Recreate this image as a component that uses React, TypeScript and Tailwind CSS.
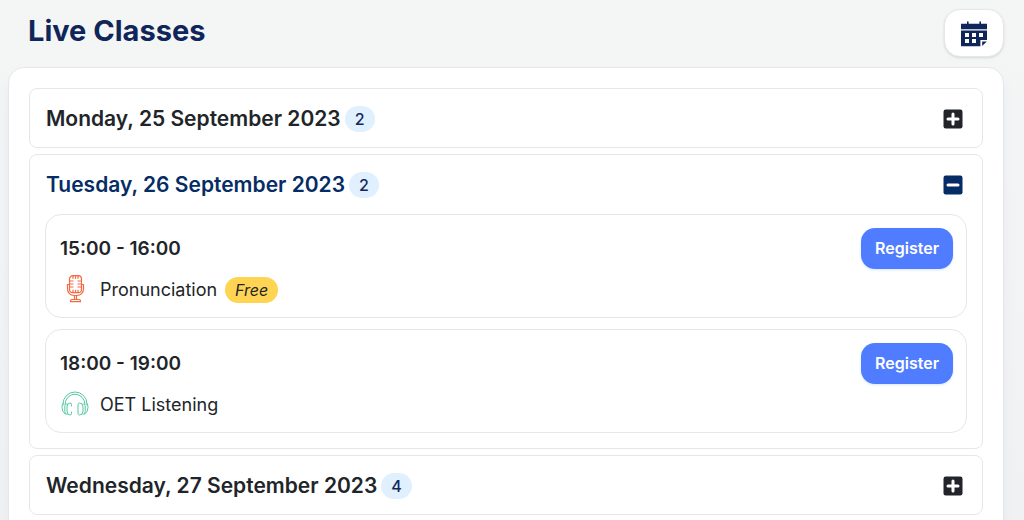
import React, { useState } from 'react'

type IconName = 'microphone' | 'headphones'

interface LiveClass {
    time: string
    title: string
    icon: IconName
    free?: boolean
}

interface ClassDay {
    id: string
    label: string
    count: number
    classes: LiveClass[]
}

const days: ClassDay[] = [
    { id: 'mon', label: 'Monday, 25 September 2023', count: 2, classes: [] },
    {
        id: 'tue',
        label: 'Tuesday, 26 September 2023',
        count: 2,
        classes: [
            { time: '15:00 - 16:00', title: 'Pronunciation', icon: 'microphone', free: true },
            { time: '18:00 - 19:00', title: 'OET Listening', icon: 'headphones' },
        ],
    },
    { id: 'wed', label: 'Wednesday, 27 September 2023', count: 4, classes: [] },
]

const CalendarIcon: React.FC = () => (
    <svg viewBox="0 0 26 26" className="size-[26px]" fill="currentColor" aria-hidden="true">
        <path d="M0 2.700h6V1a.8.8 0 0 1 1.600 0v1.700h10.800V1a.8.8 0 0 1 1.600 0v1.700h6V8.300H0z" />
        <path
            fillRule="evenodd"
            d="M0 9.600h26v9.400h-6.600V25.200H0zM4 12v4h4V12zm7 0v4h4V12zm7 0v4h4V12zM4 18v4h4v-4zm7 0v4h4v-4z"
        />
        <path d="M21.200 20.600h4.600l-4.600 4.400z" />
    </svg>
)

/** Filled square with a plus when the day is closed and a minus when it is open. */
const ToggleIcon: React.FC<{ open: boolean }> = ({ open }) => (
    <svg viewBox="0 0 20 20" className="size-5" aria-hidden="true">
        <rect x="0.500" y="0.500" width="19" height="19" rx="2.200" fill="currentColor" />
        <path
            d={open ? 'M5 10h10' : 'M5 10h10M10 5v10'}
            stroke="white"
            strokeWidth="3"
            strokeLinecap="round"
        />
    </svg>
)

const MicrophoneIcon: React.FC = () => (
    <svg
        viewBox="0 1 30 30"
        className="size-[30px] text-[#f26b41]"
        fill="none"
        stroke="currentColor"
        strokeWidth="1.200"
        strokeLinejoin="round"
        aria-hidden="true"
    >
        <rect x="9.500" y="1.700" width="12" height="17" rx="3.500" />
        <path d="M13 1.700v3M15.500 1.700v3M18 1.700v3M13 18.700v-3M15.500 18.700v-3M18 18.700v-3" />
        <path d="M9.500 7h4M9.500 10h4M9.500 13h4M21.500 7h-4M21.500 10h-4M21.500 13h-4" />
        <path d="M9.500 10.500H7.500v4.500a6.500 6.500 0 0 0 6.500 6.500h3a6.500 6.500 0 0 0 6.500-6.500v-4.500h-2" />
        <path d="M14.500 21.500v4M16.500 21.500v4M10.500 27.700v-.7q0-1.500 1.500-1.500h7q1.500 0 1.500 1.500v.7z" />
    </svg>
)

const HeadphonesIcon: React.FC = () => (
    <svg
        viewBox="0 1 30 30"
        className="size-[30px] text-[#55c9a0]"
        fill="none"
        stroke="currentColor"
        strokeWidth="1"
        strokeLinecap="round"
        strokeLinejoin="round"
        aria-hidden="true"
    >
        <path d="M3 16v-1a12 12 0 0 1 24 0v1" />
        <path d="M5 15.500a10 10.300 0 0 1 20 0" />
        <path d="M3 14.500q-1 1.500-1 4 0 4 3 6.500M27 14.500q1 1.500 1 4 0 4-3 6.500" />
        <path d="M7 15Q4.800 14.500 4.800 18v4.500q0 3 2.200 3M23 15Q25.200 14.500 25.200 18v4.500q0 3-2.200 3" />
        <path d="M11.500 17v-1.500a1.500 1.500 0 0 0-1.500-1.500Q7 14 7 18v4q0 4 3 4 1.500 0 1.500-1.500V23" />
        <path d="M18 15.500a1.500 1.500 0 0 1 1.500-1.500q3.500 0 3.500 4v4q0 4-3.500 4a1.500 1.500 0 0 1-1.500-1.500z" />
    </svg>
)

const ClassCard: React.FC<{ item: LiveClass }> = ({ item }) => (
    <li className="flex items-start justify-between rounded-2xl border border-gray-200 pt-[13px] pr-[13px] pb-[11px] pl-[14px]">
        <div>
            <p className="pt-[9px] pb-2 text-[19px] leading-6 font-semibold">{item.time}</p>
            <div className="flex items-center pt-[5px]">
                {item.icon === 'microphone' ? <MicrophoneIcon /> : <HeadphonesIcon />}
                <span className="ml-[10px] text-lg leading-8">{item.title}</span>
                {item.free && (
                    <span className="ml-2 rounded-full bg-[#ffd452] px-[10px] text-base leading-[26px] italic">
                        Free
                    </span>
                )}
            </div>
        </div>
        <button
            type="button"
            className="rounded-[14px] bg-[#507cff] px-[14px] py-2 text-base leading-[25px] font-semibold text-white shadow-sm shadow-blue-100"
        >
            Register
        </button>
    </li>
)

interface DaySectionProps {
    day: ClassDay
    open: boolean
    onToggle: () => void
}

const DaySection: React.FC<DaySectionProps> = ({ day, open, onToggle }) => (
    <section className="rounded-lg border border-gray-200">
        <h2>
            <button
                type="button"
                aria-expanded={open}
                onClick={onToggle}
                className={`flex w-full items-center px-4 pt-[17px] pb-[15px] text-left ${open ? 'text-[#052c65]' : 'text-[#212529]'}`}
            >
                <span className="text-[21px] leading-[26px] font-semibold">{day.label}</span>
                <span className="ml-1 rounded-full bg-[#e0f0ff] px-[10px] text-base leading-[26px] font-medium text-[#14275a]">
                    {day.count}
                </span>
                <span className="mr-[3px] ml-auto">
                    <ToggleIcon open={open} />
                </span>
            </button>
        </h2>
        {open && day.classes.length > 0 && (
            <ul className="flex flex-col gap-[11px] px-[15px] pt-px pb-[15px]">
                {day.classes.map((item) => (
                    <ClassCard key={item.time} item={item} />
                ))}
            </ul>
        )}
    </section>
)

const App: React.FC = () => {
    const [openDay, setOpenDay] = useState<string | null>('tue')

    return (
        <main className="min-h-screen bg-linear-to-b from-[#f4f6f6] to-[#eff1f3] pr-5 pl-2 font-['Inter','Liberation_Sans',sans-serif] text-[#212529]">
            <header className="flex items-start justify-between pt-[9px] pb-[10px] pl-5">
                <h1 className="pt-1 text-[29px] leading-9 font-bold text-[#10265a]">Live Classes</h1>
                <button
                    type="button"
                    aria-label="Calendar"
                    className="flex h-12 w-[60px] items-center justify-center rounded-2xl border border-gray-200 bg-white pt-[2px] text-[#10265a] shadow-sm"
                >
                    <CalendarIcon />
                </button>
            </header>
            <div className="flex flex-col gap-[6px] rounded-t-2xl border border-gray-200 bg-white p-5 shadow-lg shadow-gray-200">
                {days.map((day) => (
                    <DaySection
                        key={day.id}
                        day={day}
                        open={openDay === day.id}
                        onToggle={() => setOpenDay(openDay === day.id ? null : day.id)}
                    />
                ))}
            </div>
        </main>
    )
}

export default App
